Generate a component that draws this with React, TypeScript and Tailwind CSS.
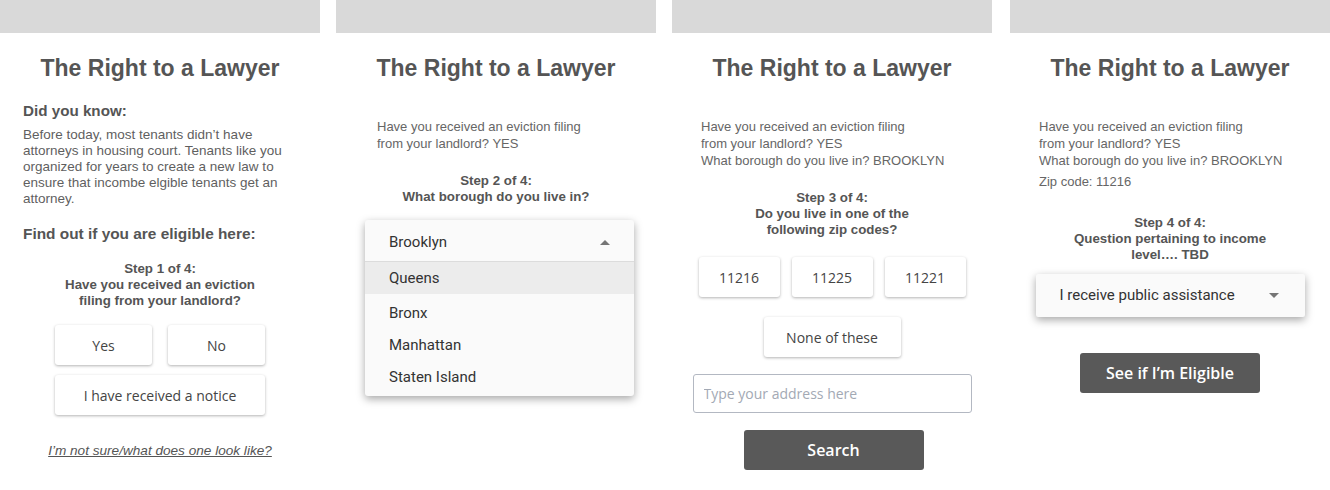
const sans = "font-['Liberation_Sans',Arial,sans-serif]";
const open = "font-['Open_Sans',sans-serif]";
const roboto = "font-['Roboto',sans-serif]";

function Title() {
  return (
    <>
      <div className="h-[33px] bg-[#d9d9d9]" />
      <h1 className={`${sans} mt-[21px] text-center text-[23px] leading-[28px] font-bold text-[#555]`}>
        The Right to a Lawyer
      </h1>
    </>
  );
}

function Card({ children, className = "" }: { children: React.ReactNode; className?: string }) {
  return (
    <button
      className={`${open} h-10 rounded-[3px] bg-white text-[14px] text-[#444] shadow-[0_1px_3px_rgba(0,0,0,0.3)] ${className}`}
    >
      {children}
    </button>
  );
}

function Caret({ up = false }: { up?: boolean }) {
  return (
    <svg width="10" height="5" viewBox="0 0 10 5" className="fill-[#757575]">
      {up ? <path d="M0 5 L5 0 L10 5 Z" /> : <path d="M0 0 L10 0 L5 5 Z" />}
    </svg>
  );
}

function Step({ lines, className = "" }: { lines: string[]; className?: string }) {
  return (
    <div className={`${sans} text-center text-[13.3px] leading-[16px] font-bold text-[#555] ${className}`}>
      {lines.map((l) => (
        <div key={l}>{l}</div>
      ))}
    </div>
  );
}

function Answers({ lines, className = "" }: { lines: string[]; className?: string }) {
  return (
    <div className={`${sans} text-[13px] leading-[17px] text-[#666] ${className}`}>
      {lines.map((l) => (
        <div key={l}>{l}</div>
      ))}
    </div>
  );
}

function PanelOne() {
  return (
    <div className="flex w-[320px] shrink-0 flex-col">
      <Title />
      <div className={`${sans} px-[23px] text-[#555]`}>
        <h2 className="mt-5 text-[15.2px] leading-[18px] font-bold">Did you know:</h2>
        <p className="mt-[7px] text-[13.5px] leading-[16px] text-[#5f5f5f]">
          Before today, most tenants didn’t have
          <br />
          attorneys in housing court. Tenants like you
          <br />
          organized for years to create a new law to
          <br />
          ensure that incombe elgible tenants get an
          <br />
          attorney.
        </p>
        <h2 className="mt-[18px] text-[15.4px] leading-[18px] font-bold">Find out if you are eligible here:</h2>
      </div>
      <Step
        className="mt-[18px]"
        lines={["Step 1 of 4:", "Have you received an eviction", "filing from your landlord?"]}
      />
      <div className="mx-auto mt-4 flex w-[210px] flex-col gap-[10px]">
        <div className="flex gap-4">
          <Card className="w-[97px]">Yes</Card>
          <Card className="w-[97px]">No</Card>
        </div>
        <Card className="w-[210px]">I have received a notice</Card>
      </div>
      <a className={`${sans} mt-[28px] text-center text-[13.6px] leading-[16px] text-[#555] italic underline`}>
        I’m not sure/what does one look like?
      </a>
    </div>
  );
}

function PanelTwo() {
  const items = ["Bronx", "Manhattan", "Staten Island"];
  return (
    <div className="flex w-[320px] shrink-0 flex-col">
      <Title />
      <Answers
        className="mt-9 pl-[41px]"
        lines={["Have you received an eviction filing", "from your landlord? YES"]}
      />
      <Step className="mt-[21px]" lines={["Step 2 of 4:", "What borough do you live in?"]} />
      <div
        className={`${roboto} mt-[15px] ml-[29px] w-[269px] rounded-[3px] bg-[#fafafa] pb-[3px] text-[15px] text-[#333] shadow-[0_3px_8px_rgba(0,0,0,0.35)]`}
      >
        <div className="flex h-[42px] items-center justify-between border-b border-[#dcdcdc] pt-[3px] pr-6 pl-6">
          <span>Brooklyn</span>
          <Caret up />
        </div>
        <div className="flex h-8 items-center bg-[#ececec] pl-6">Queens</div>
        <div className="mt-[3px]">
          {items.map((i) => (
            <div key={i} className="flex h-8 items-center pl-6">
              {i}
            </div>
          ))}
        </div>
      </div>
    </div>
  );
}

function PanelThree() {
  return (
    <div className="flex w-[320px] shrink-0 flex-col">
      <Title />
      <Answers
        className="mt-9 pl-[29px]"
        lines={["Have you received an eviction filing", "from your landlord? YES", "What borough do you live in? BROOKLYN"]}
      />
      <Step
        className="mt-[21px] leading-[16.5px]"
        lines={["Step 3 of 4:", "Do you live in one of the", "following zip codes?"]}
      />
      <div className="mt-[19px] flex justify-center gap-3">
        <Card className="w-[81px]">11216</Card>
        <Card className="w-[81px]">11225</Card>
        <Card className="w-[81px]">11221</Card>
      </div>
      <div className="mt-5 flex justify-center">
        <Card className="w-[137px]">None of these</Card>
      </div>
      <div className="mt-[17px] flex justify-center">
        <input
          placeholder="Type your address here"
          className={`${open} h-[39px] w-[279px] rounded-[3px] border border-[#b3b8c2] px-[10px] text-[14px] text-[#444] outline-none placeholder:text-[#a3a9b4]`}
        />
      </div>
      <div className="mt-[17px] flex justify-center">
        <button
          className={`${open} ml-[3px] h-10 w-[180px] rounded-[3px] bg-[#595959] text-[16px] font-semibold text-white`}
        >
          Search
        </button>
      </div>
    </div>
  );
}

function PanelFour() {
  return (
    <div className="ml-[2px] flex w-[320px] shrink-0 flex-col">
      <Title />
      <Answers
        className="mt-9 pl-[29px]"
        lines={["Have you received an eviction filing", "from your landlord? YES", "What borough do you live in? BROOKLYN"]}
      />
      <div className={`${sans} mt-1 pl-[29px] text-[13px] leading-[17px] text-[#666]`}>Zip code: 11216</div>
      <Step
        className="mt-[25px] leading-[16.5px]"
        lines={["Step 4 of 4:", "Question pertaining to income", "level…. TBD"]}
      />
      <div className="mt-[11px] flex justify-center">
        <div
          className={`${roboto} flex h-[43px] w-[269px] items-center justify-between rounded-[2px] bg-[#fafafa] pr-[26px] pl-6 text-[15px] text-[#333] shadow-[0_3px_8px_rgba(0,0,0,0.35)]`}
        >
          <span>I receive public assistance</span>
          <Caret />
        </div>
      </div>
      <div className="mt-9 flex justify-center">
        <button
          className={`${open} h-10 w-[180px] rounded-[3px] bg-[#595959] text-[16px] font-semibold text-white`}
        >
          See if I’m Eligible
        </button>
      </div>
    </div>
  );
}

export default function App() {
  return (
    <div className="flex h-[490px] w-[1330px] gap-4 overflow-hidden bg-white">
      <PanelOne />
      <PanelTwo />
      <PanelThree />
      <PanelFour />
    </div>
  );
}
